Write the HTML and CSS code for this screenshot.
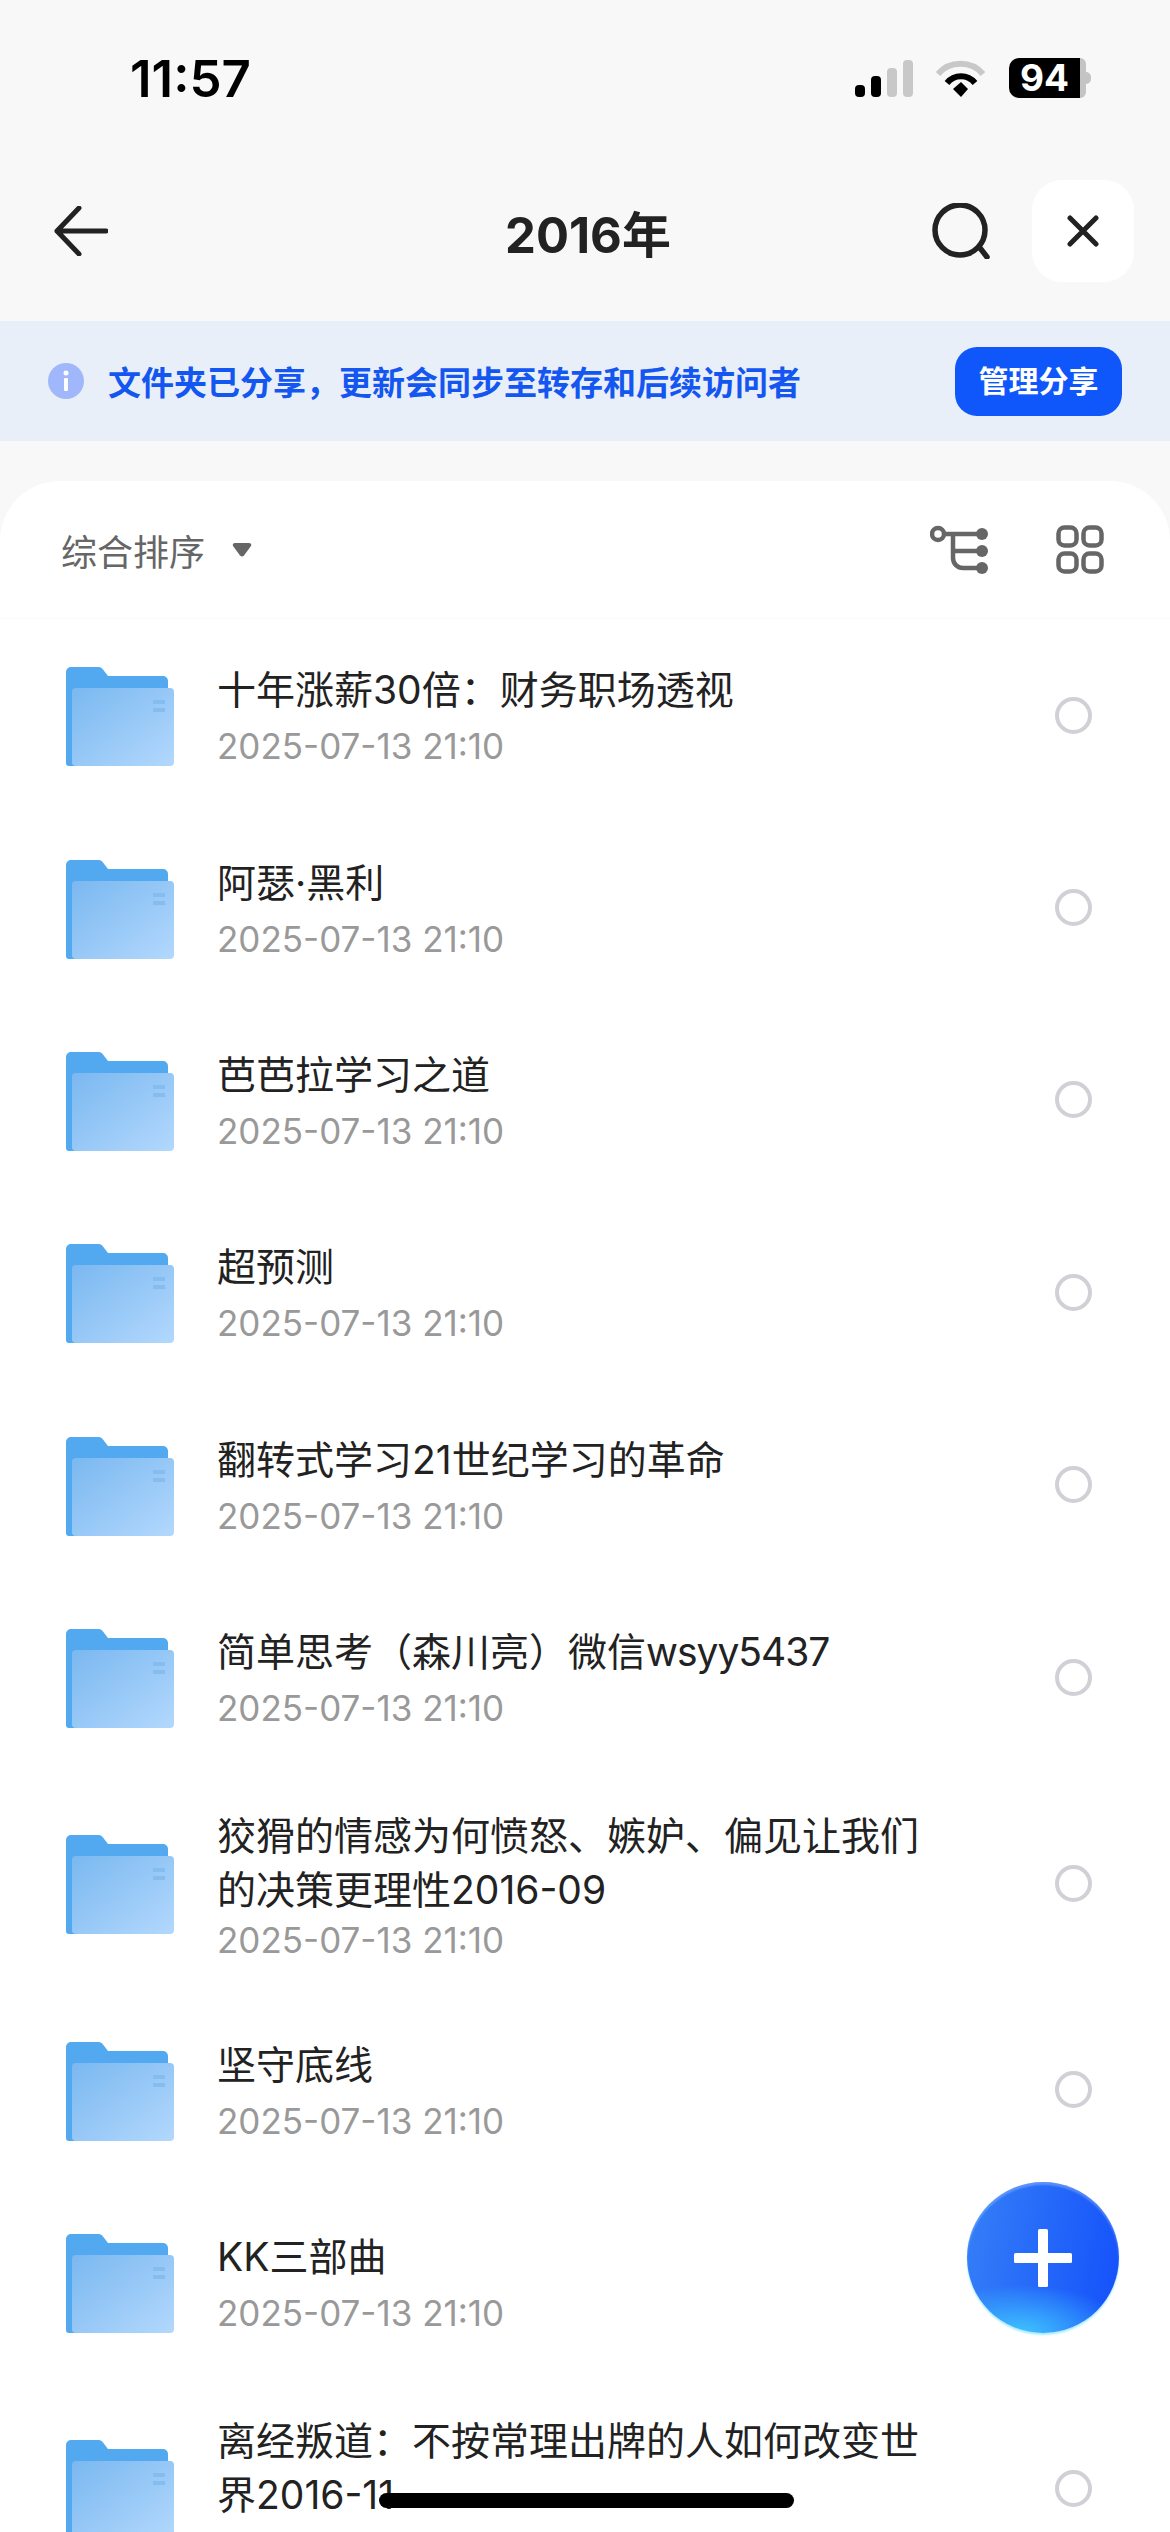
FILE: index.html
```html
<!DOCTYPE html>
<html lang="zh-CN">
<head>
	<meta charset="utf-8">
	<title>2016年</title>
	<link rel="stylesheet" href="styles.css">
</head>
<body>
	<svg class="defs" width="0" height="0">
		<defs>
			<linearGradient id="folder-front" x1="0" y1="0" x2="1" y2="1">
				<stop offset="0" stop-color="#7ab8f0"/>
				<stop offset="1" stop-color="#b3d8fd"/>
			</linearGradient>
			<symbol id="folder" viewBox="0 0 108 100">
				<path d="M0 5a5 5 0 0 1 5-5H33a5 5 0 0 1 4 2.5L42 9H97a5 5 0 0 1 5 5V99H3a3 3 0 0 1-3-3Z" fill="#52a9ef"/>
				<rect x="6" y="21" width="102" height="78" rx="4" fill="url(#folder-front)"/>
				<rect x="87" y="33" width="12" height="4" fill="#86bdf1"/>
				<rect x="87" y="41" width="12" height="4" fill="#86bdf1"/>
			</symbol>
		</defs>
	</svg>

	<div class="phone">
		<div class="status">
			<span class="time">11:57</span>
			<div class="status-icons">
				<svg class="signal" width="58" height="37" viewBox="0 0 58 37">
					<rect x="0" y="25" width="10" height="12" rx="4" fill="#000"/>
					<rect x="16" y="16" width="10" height="21" rx="4" fill="#000"/>
					<rect x="32" y="8" width="10" height="29" rx="4" fill="#c8c8c8"/>
					<rect x="48" y="0" width="10" height="37" rx="4" fill="#c8c8c8"/>
				</svg>
				<svg class="wifi" width="52" height="37" viewBox="0 0 52 37">
					<path d="M3 14A30 30 0 0 1 48 14" fill="none" stroke="#c8c8c8" stroke-width="6"/>
					<path d="M12 23A18 18 0 0 1 40 23" fill="none" stroke="#000" stroke-width="6"/>
					<path d="M18 29L26 22L33 29L26 37Z" fill="#000"/>
				</svg>
				<div class="battery">
					<span class="battery-level">94</span>
					<span class="battery-rest"></span>
					<span class="battery-nub"></span>
				</div>
			</div>
		</div>

		<div class="nav">
			<svg class="back" width="54" height="50" viewBox="0 0 54 50">
				<path d="M25 2L3 25L25 48M3 25H52" fill="none" stroke="#222" stroke-width="5" stroke-linecap="round" stroke-linejoin="round"/>
			</svg>
			<h1 class="nav-title">2016年</h1>
			<svg class="search" width="58" height="56" viewBox="0 0 58 56">
				<circle cx="28" cy="27" r="25" fill="none" stroke="#222" stroke-width="5.5"/>
				<path d="M48 45L55 54" stroke="#222" stroke-width="5.5" stroke-linecap="round"/>
			</svg>
			<div class="close-btn">
				<svg width="32" height="32" viewBox="0 0 32 32">
					<path d="M3 3L29 29M29 3L3 29" stroke="#222" stroke-width="5" stroke-linecap="round"/>
				</svg>
			</div>
		</div>

		<div class="banner">
			<svg class="info" width="36" height="36" viewBox="0 0 36 36">
				<circle cx="18" cy="18" r="18" fill="#a0b8fb"/>
				<circle cx="18" cy="10" r="2.5" fill="#fff"/>
				<rect x="16" y="15" width="4" height="13" rx="1" fill="#fff"/>
			</svg>
			<span class="banner-text">文件夹已分享，更新会同步至转存和后续访问者</span>
			<div class="manage-btn">管理分享</div>
		</div>

		<div class="sheet">
			<div class="sheet-head">
				<span class="sort">综合排序</span>
				<svg class="caret" width="20" height="14" viewBox="0 0 20 14">
					<path d="M3 0H17Q20 0 19 3L12 12.500Q10 14.500 8 12.500L1 3Q0 0 3 0Z" fill="#666"/>
				</svg>
				<svg class="tree" width="58" height="50" viewBox="0 0 58 50">
					<circle cx="8" cy="9" r="6" fill="none" stroke="#666" stroke-width="4.5"/>
					<path d="M14 9H52M23 9V33a10 10 0 0 0 10 10H52M23 26H52" fill="none" stroke="#666" stroke-width="4.5"/>
					<circle cx="52" cy="9" r="6" fill="#666"/>
					<circle cx="52" cy="26" r="6" fill="#666"/>
					<circle cx="52" cy="43" r="6" fill="#666"/>
				</svg>
				<svg class="grid" width="48" height="49" viewBox="0 0 48 49">
					<g fill="none" stroke="#666" stroke-width="4.5">
						<rect x="2.500" y="2.500" width="18" height="18" rx="6"/>
						<rect x="27.500" y="2.500" width="18" height="18" rx="6"/>
						<rect x="2.500" y="28.500" width="18" height="18" rx="6"/>
						<rect x="27.500" y="28.500" width="18" height="18" rx="6"/>
					</g>
				</svg>
			</div>

			<div class="list">
				<div class="row">
					<svg class="folder" width="108" height="100"><use href="#folder"/></svg>
					<div class="info-col">
						<div class="name">十年涨薪30倍：财务职场透视</div>
						<div class="date">2025-07-13 21:10</div>
					</div>
					<span class="radio"></span>
				</div>
				<div class="row">
					<svg class="folder" width="108" height="100"><use href="#folder"/></svg>
					<div class="info-col">
						<div class="name">阿瑟·黑利</div>
						<div class="date">2025-07-13 21:10</div>
					</div>
					<span class="radio"></span>
				</div>
				<div class="row">
					<svg class="folder" width="108" height="100"><use href="#folder"/></svg>
					<div class="info-col">
						<div class="name">芭芭拉学习之道</div>
						<div class="date">2025-07-13 21:10</div>
					</div>
					<span class="radio"></span>
				</div>
				<div class="row">
					<svg class="folder" width="108" height="100"><use href="#folder"/></svg>
					<div class="info-col">
						<div class="name">超预测</div>
						<div class="date">2025-07-13 21:10</div>
					</div>
					<span class="radio"></span>
				</div>
				<div class="row">
					<svg class="folder" width="108" height="100"><use href="#folder"/></svg>
					<div class="info-col">
						<div class="name">翻转式学习21世纪学习的革命</div>
						<div class="date">2025-07-13 21:10</div>
					</div>
					<span class="radio"></span>
				</div>
				<div class="row">
					<svg class="folder" width="108" height="100"><use href="#folder"/></svg>
					<div class="info-col">
						<div class="name">简单思考（森川亮）微信<span class="latin">wsyy5437</span></div>
						<div class="date">2025-07-13 21:10</div>
					</div>
					<span class="radio"></span>
				</div>
				<div class="row two-line">
					<svg class="folder" width="108" height="100"><use href="#folder"/></svg>
					<div class="info-col">
						<div class="name">狡猾的情感为何愤怒、嫉妒、偏见让我们的决策更理性2016-09</div>
						<div class="date">2025-07-13 21:10</div>
					</div>
					<span class="radio"></span>
				</div>
				<div class="row">
					<svg class="folder" width="108" height="100"><use href="#folder"/></svg>
					<div class="info-col">
						<div class="name">坚守底线</div>
						<div class="date">2025-07-13 21:10</div>
					</div>
					<span class="radio"></span>
				</div>
				<div class="row">
					<svg class="folder" width="108" height="100"><use href="#folder"/></svg>
					<div class="info-col">
						<div class="name">KK三部曲</div>
						<div class="date">2025-07-13 21:10</div>
					</div>
					<span class="radio"></span>
				</div>
				<div class="row two-line">
					<svg class="folder" width="108" height="100"><use href="#folder"/></svg>
					<div class="info-col">
						<div class="name">离经叛道：不按常理出牌的人如何改变世界2016-11</div>
						<div class="date">2025-07-13 21:10</div>
					</div>
					<span class="radio"></span>
				</div>
			</div>
		</div>

		<div class="fab">
			<svg width="58" height="58" viewBox="0 0 58 58">
				<rect x="24" y="0" width="10" height="58" rx="1.500" fill="#fff"/>
				<rect x="0" y="24" width="58" height="10" rx="1.500" fill="#fff"/>
			</svg>
		</div>
		<div class="home-bar"></div>
	</div>
</body>
</html>
```
FILE: styles.css
```css
body {
	margin: 0;
	font-family: Inter, "Noto Sans CJK SC", sans-serif;
}
svg {
	display: block;
	flex: none;
}
.defs {
	position: absolute;
}
.phone {
	position: relative;
	width: 1170px;
	height: 2532px;
	overflow: hidden;
	background: #f8f8f8;
}

/* status bar */
.status {
	height: 156px;
	display: flex;
	align-items: center;
	padding: 0 79px 0 130px;
}
.time {
	font-size: 51px;
	font-weight: 600;
	color: #000;
}
.status-icons {
	margin-left: auto;
	display: flex;
	align-items: center;
}
.wifi {
	margin-left: 22px;
}
.battery {
	margin-left: 22px;
	display: flex;
	align-items: center;
}
.battery-level {
	width: 71px;
	height: 40px;
	background: #000;
	border-radius: 10px 0 0 10px;
	color: #fff;
	font-size: 37px;
	font-weight: 700;
	line-height: 40px;
	text-align: center;
}
.battery-rest {
	width: 6px;
	height: 40px;
	background: #c4c4c4;
	border-radius: 0 8px 8px 0;
}
.battery-nub {
	width: 5px;
	height: 12px;
	background: #c4c4c4;
	border-radius: 0 6px 6px 0;
}

/* nav */
.nav {
	position: relative;
	height: 102px;
	padding: 24px 36px 39px 54px;
	display: flex;
	align-items: center;
}
.nav-title {
	position: absolute;
	left: 6px;
	right: 0;
	margin: 0;
	font-size: 49px;
	font-weight: 700;
	color: #222;
	text-align: center;
}
.search {
	margin-left: auto;
}
.close-btn {
	margin-left: 42px;
	width: 102px;
	height: 102px;
	background: #fff;
	border-radius: 30px;
	display: flex;
	align-items: center;
	justify-content: center;
}

/* shared banner */
.banner {
	height: 120px;
	background: #e9eff9;
	display: flex;
	align-items: center;
	padding: 0 48px;
}
.banner-text {
	margin-left: 24px;
	font-size: 33px;
	font-weight: 700;
	color: #1456f0;
}
.manage-btn {
	margin-left: auto;
	width: 167px;
	height: 69px;
	background: #0f57fb;
	border-radius: 22px;
	color: #fff;
	font-size: 30px;
	font-weight: 700;
	line-height: 69px;
	text-align: center;
}

/* list sheet */
.sheet {
	margin-top: 40px;
	background: #fff;
	border-radius: 60px 60px 0 0;
}
.sheet-head {
	height: 137px;
	border-bottom: 1px solid #fbfbfb;
	display: flex;
	align-items: center;
	padding: 0 66px 0 61px;
}
.sort {
	font-size: 36px;
	color: #666;
}
.caret {
	margin-left: 27px;
}
.tree {
	margin-left: auto;
}
.grid {
	margin-left: 68px;
}
.row {
	min-height: 192.4px;
	box-sizing: border-box;
	padding: 24px 78px 24px 66px;
	display: flex;
	align-items: center;
}
.folder {
	margin-top: 4px;
}
.info-col {
	margin-left: 43px;
	margin-top: 8px;
	width: 710px;
}
.two-line .info-col {
	margin-top: 12px;
}
.name {
	font-size: 39px;
	line-height: 54px;
	color: #222;
}
.latin {
	letter-spacing: -1px;
}
.date {
	font-size: 35px;
	line-height: 58px;
	color: #999;
}
.two-line .date {
	margin-top: -6px;
}
.radio {
	margin-left: auto;
	width: 37px;
	height: 37px;
	box-sizing: border-box;
	border: 4px solid #d0d0d6;
	border-radius: 50%;
}

/* floating */
.fab {
	position: absolute;
	left: 967px;
	top: 2182px;
	width: 152px;
	height: 151px;
	border-radius: 50%;
	background:
		radial-gradient(ellipse 70% 32% at 35% 100%, #3fc3ff, rgba(63, 195, 255, 0)),
		linear-gradient(100deg, #3580f7, #1450fb);
	box-shadow: inset 0 3px 2px rgba(255, 255, 255, .25), 0 2px 2px #a8ecff;
	display: flex;
	align-items: center;
	justify-content: center;
}
.home-bar {
	position: absolute;
	left: 379px;
	top: 2493px;
	width: 415px;
	height: 15px;
	background: #000;
	border-radius: 8px;
}
```
